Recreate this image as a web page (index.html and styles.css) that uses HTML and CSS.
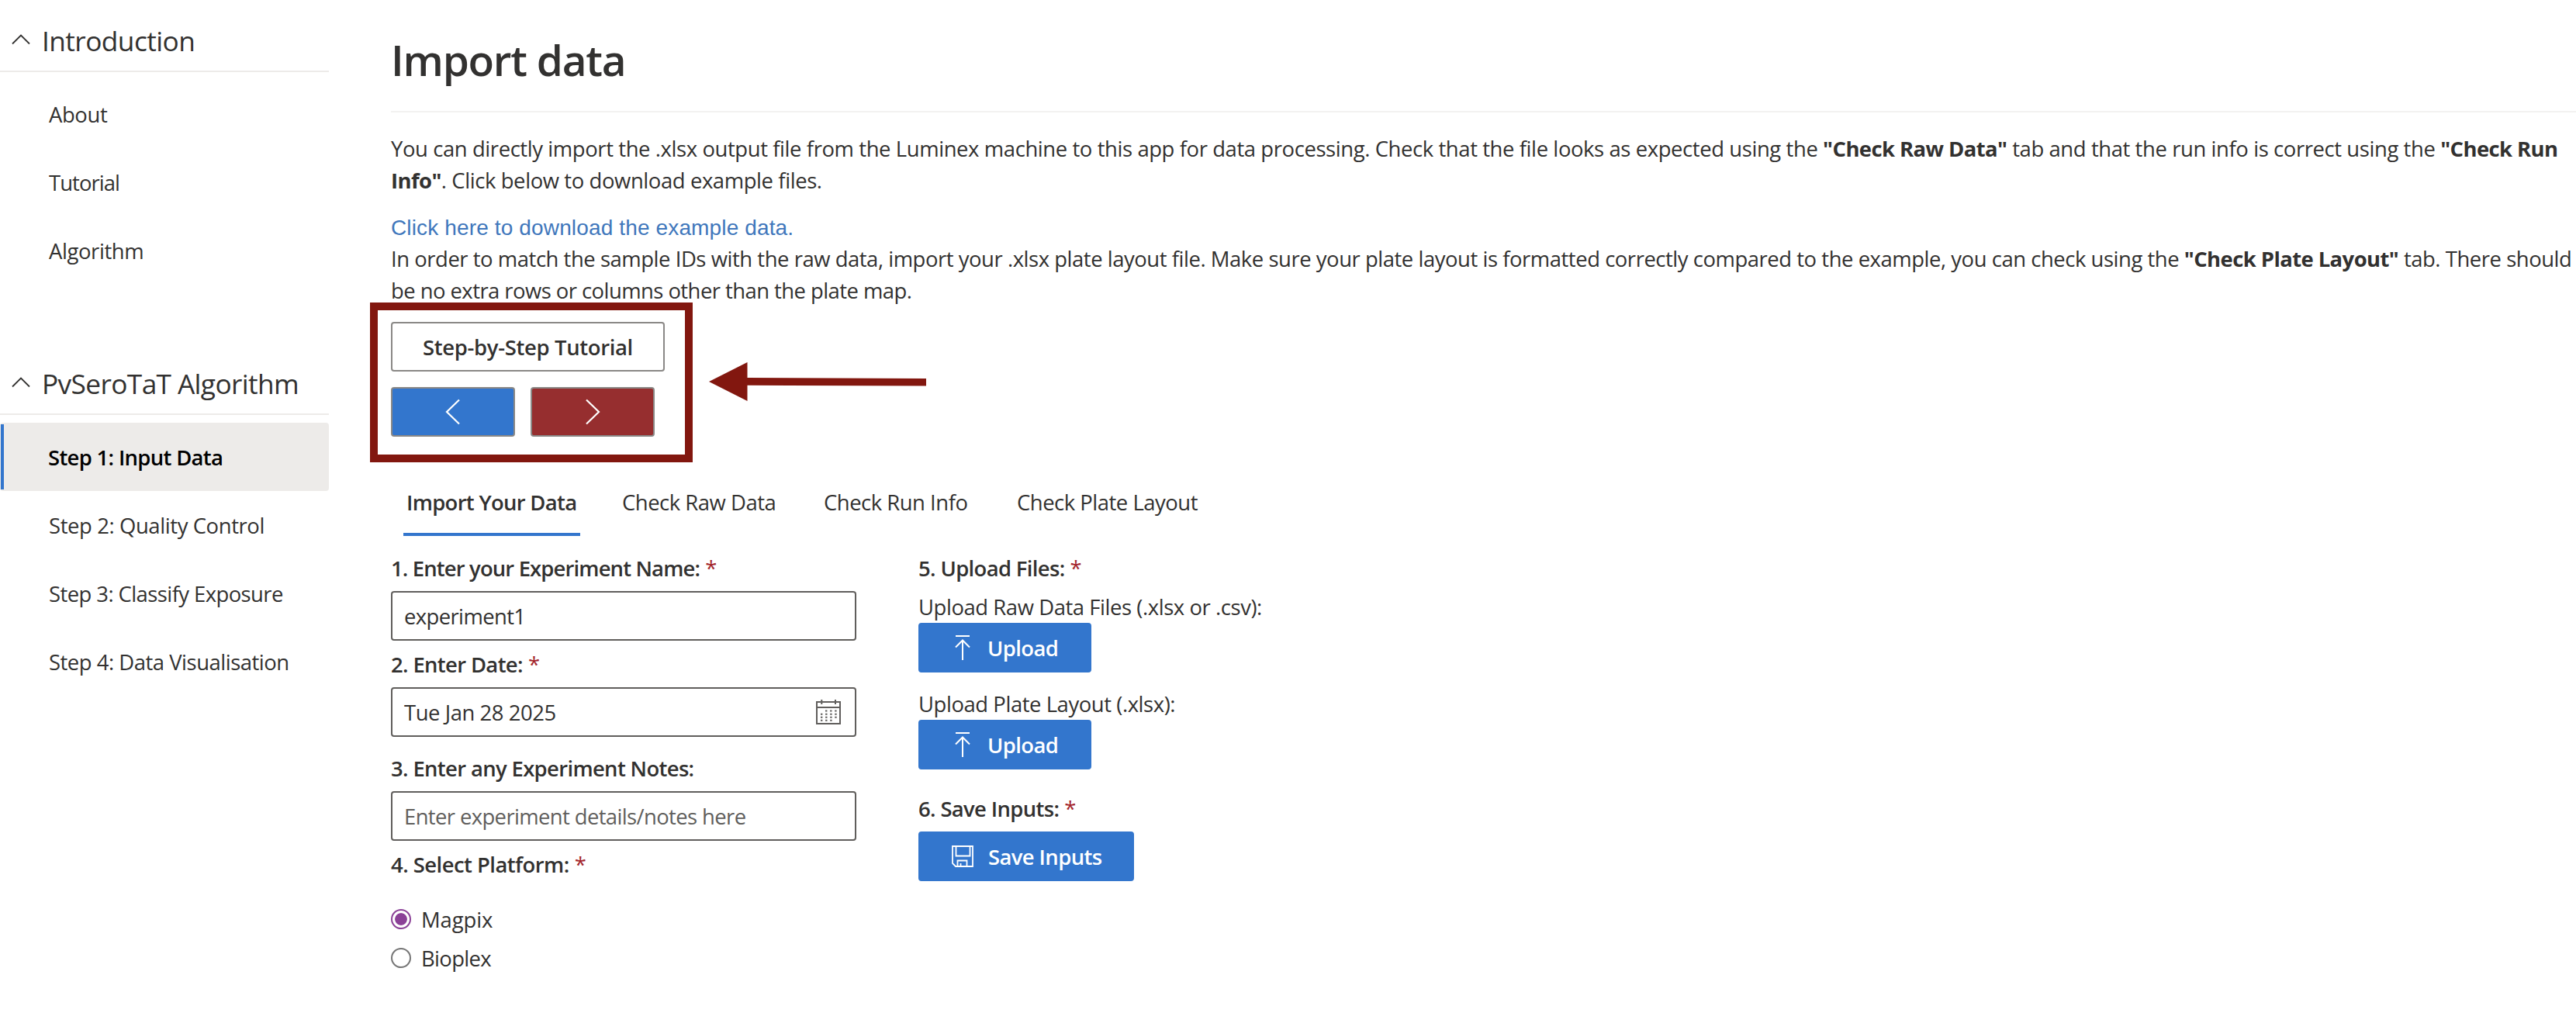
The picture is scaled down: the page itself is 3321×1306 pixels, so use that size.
FILE: index.html
```html
<!DOCTYPE html>
<html lang="en">
<head>
<meta charset="utf-8">
<title>Import data</title>
<link rel="stylesheet" href="styles.css">
</head>
<body>
<div class="app">
  <nav class="sidebar">
    <section class="nav-group">
      <h2 class="nav-header"><svg class="nav-chevron" viewBox="0 0 24 14"><path d="M1 12.5 12 1.5 23 12.5"/></svg><span class="nav-title-intro">Introduction</span></h2>
      <ul class="nav-list">
        <li class="nav-item">About</li>
        <li class="nav-item nav-tutorial">Tutorial</li>
        <li class="nav-item">Algorithm</li>
      </ul>
    </section>
    <section class="nav-group">
      <h2 class="nav-header"><svg class="nav-chevron" viewBox="0 0 24 14"><path d="M1 12.5 12 1.5 23 12.5"/></svg><span>PvSeroTaT Algorithm</span></h2>
      <ul class="nav-list">
        <li class="nav-item nav-item-active">Step 1: Input Data</li>
        <li class="nav-item">Step 2: Quality Control</li>
        <li class="nav-item nav-classify">Step 3: Classify Exposure</li>
        <li class="nav-item nav-visual">Step 4: Data Visualisation</li>
      </ul>
    </section>
  </nav>

  <main class="content">
    <h1 class="page-title">Import data</h1>
    <div class="copy">
      <p>You can directly import the .xlsx output file from the Luminex machine to this app for data processing. Check that the file looks as expected using the <b>"Check Raw Data"</b> tab and that the run info is correct using the <b>"Check Run<br>Info"</b>. Click below to download example files.</p>
      <p class="download"><a class="download-link">Click here to download the example data.</a></p>
      <p class="plate-copy">In order to match the sample IDs with the raw data, import your .xlsx plate layout file. Make sure your plate layout is formatted correctly compared to the example, you can check using the <b>"Check Plate Layout"</b> tab. There should<br><span class="plate-tail">be no extra rows or columns other than the plate map.</span></p>
    </div>

    <div class="tutorial">
      <button class="btn btn-tutorial">Step-by-Step Tutorial</button>
      <div class="pager">
        <button class="btn btn-prev"><svg class="pager-icon" viewBox="0 0 20 34"><path d="M18 1.5 2 17 18 32.5"/></svg></button>
        <button class="btn btn-next"><svg class="pager-icon" viewBox="0 0 20 34"><path d="M2 1.5 18 17 2 32.5"/></svg></button>
      </div>
      <div class="highlight"></div>
      <svg class="pointer" viewBox="0 0 280 50"><path d="M0 25 49.5 0V20L280 21V30.5L49.5 29.7V50Z"/></svg>
    </div>

    <div class="tabs">
      <div class="tab tab-active">Import Your Data</div>
      <div class="tab">Check Raw Data</div>
      <div class="tab">Check Run Info</div>
      <div class="tab">Check Plate Layout</div>
    </div>

    <div class="form">
      <div class="form-col">
        <label class="label label-name">1. Enter your Experiment Name:<span class="req">*</span></label>
        <input class="field" type="text" value="experiment1">
        <label class="label">2. Enter Date:<span class="req">*</span></label>
        <div class="field date-field"><span>Tue Jan 28 2025</span>
          <svg class="calendar" viewBox="0 0 32 32">
            <path d="M1 3H31V31H1ZM1 10H31M7.3 0V6M25 0V6"/>
            <path class="dots" d="M12 14.5H27M6 18.7H27M6 22.7H27M6 26.7H21"/>
          </svg>
        </div>
        <label class="label label-notes">3. Enter any Experiment Notes:</label>
        <input class="field" type="text" placeholder="Enter experiment details/notes here">
        <label class="label label-platform">4. Select Platform:<span class="req">*</span></label>
        <div class="radios">
          <div class="radio"><span class="radio-mark radio-on"></span>Magpix</div>
          <div class="radio radio-bioplex"><span class="radio-mark"></span>Bioplex</div>
        </div>
      </div>
      <div class="form-col">
        <label class="label">5. Upload Files:<span class="req">*</span></label>
        <div class="upload">
          <div class="upload-text">Upload Raw Data Files (.xlsx or .csv):</div>
          <button class="btn btn-primary"><svg class="upload-icon" viewBox="0 0 20 32"><path d="M1 1H19M10 32V6.5M1 15.5 10 6.5 19 15.5"/></svg>Upload</button>
        </div>
        <div class="upload">
          <div class="upload-text">Upload Plate Layout (.xlsx):</div>
          <button class="btn btn-primary"><svg class="upload-icon" viewBox="0 0 20 32"><path d="M1 1H19M10 32V6.5M1 15.5 10 6.5 19 15.5"/></svg>Upload</button>
        </div>
        <label class="label">6. Save Inputs:<span class="req">*</span></label>
        <button class="btn btn-primary btn-save"><svg class="save-icon" viewBox="0 0 28 28"><path d="M1 1H27V27H5L1 23ZM5.5 1V13.5H23.5V1M7.5 27V19.5H19.5V27M11.5 27V23"/></svg>Save Inputs</button>
      </div>
    </div>
  </main>
</div>
</body>
</html>
```
FILE: styles.css
```css
* {
  box-sizing: border-box;
}

body {
  margin: 0;
  background: #fff;
  color: #323130;
  font: 400 27.44px/41px "Open Sans", "Noto Sans", sans-serif;
  letter-spacing: -0.0158em;
  overflow: hidden;
}

h1, h2, p, ul {
  margin: 0;
  padding: 0;
}

.app {
  display: flex;
  width: 3321px;
  height: 1306px;
}

/* Sidebar */
.sidebar {
  width: 424px;
  margin-right: 80px;
  padding-top: 13px;
  display: flex;
  flex-direction: column;
  gap: 88px;
}

.nav-header {
  display: flex;
  height: 80px;
  border-bottom: 2px solid #edebe9;
  font-size: 35.28px;
  font-weight: 400;
  line-height: 78px;
  letter-spacing: -0.0178em;
}

.nav-title-intro {
  letter-spacing: -0.016em;
}

.nav-chevron {
  width: 24px;
  height: 14px;
  margin: 31px 15px 0 15px;
  fill: none;
  stroke: #323130;
  stroke-width: 1.8;
}

.nav-list {
  padding-top: 10px;
  list-style: none;
}

.nav-item {
  height: 88px;
  padding-left: 63px;
  line-height: 89px;
  letter-spacing: -0.0145em;
}

.nav-tutorial {
  letter-spacing: -0.034em;
}

.nav-classify {
  letter-spacing: -0.021em;
}

.nav-visual {
  letter-spacing: -0.0175em;
}

.nav-item-active {
  padding-left: 62px;
  border-radius: 4px;
  background: linear-gradient(#3376cd, #3376cd) 1px 2px / 4px 84px no-repeat #edebe9;
  color: #000;
  font-weight: 600;
  letter-spacing: -0.0246em;
}

/* Main column */
.content {
  flex: 1;
}

.page-title {
  margin-top: 40px;
  padding-bottom: 29px;
  border-bottom: 2px solid #f3f2f1;
  font-size: 54.9px;
  font-weight: 600;
  line-height: 74px;
  letter-spacing: -0.0225em;
}

.copy {
  padding-top: 26px;
  letter-spacing: -0.0147em;
  white-space: nowrap;
}

.copy b {
  letter-spacing: -0.021em;
}

.plate-copy {
  letter-spacing: -0.0166em;
}

.plate-tail {
  letter-spacing: -0.02em;
}

.download {
  height: 40px;
  margin-top: 20px;
  line-height: 40px;
}

.download-link {
  color: #4077bc;
  font-family: "Liberation Sans", Arial, sans-serif;
  font-size: 28px;
  letter-spacing: 0.005em;
}

.btn {
  display: flex;
  align-items: center;
  justify-content: center;
  height: 64px;
  padding: 0;
  border: 2px solid #8a8886;
  border-radius: 4px;
  font: inherit;
  font-weight: 600;
  letter-spacing: -0.0121em;
  color: #323130;
  background: #fff;
}

.tutorial {
  position: relative;
  margin-top: 20px;
}

.btn-tutorial {
  width: 353px;
}

.pager {
  display: flex;
  gap: 20px;
  margin-top: 20px;
}

.btn-prev,
.btn-next {
  width: 160px;
  background: #3376cd;
}

.btn-next {
  background: #962e2f;
}

.pager-icon {
  width: 20px;
  height: 34px;
  fill: none;
  stroke: #fff;
  stroke-width: 2.2;
}

.highlight {
  position: absolute;
  left: -27px;
  top: -25px;
  width: 416px;
  height: 206px;
  border: 10px solid #82170f;
}

.pointer {
  position: absolute;
  left: 409.5px;
  top: 52px;
  width: 280px;
  height: 50px;
  fill: #82170f;
}

/* Tabs */
.tabs {
  display: grid;
  grid-template-columns: 278px 260px 249px 260px;
  margin: 40px 0 11px 16px;
}

.tab {
  height: 88px;
  padding-left: 4px;
  line-height: 89px;
  letter-spacing: -0.0175em;
}

.tab-active {
  width: 228px;
  background: linear-gradient(#3376cd, #3376cd) bottom / 100% 4px no-repeat;
  font-weight: 600;
  letter-spacing: -0.025em;
}

/* Form */
.form {
  display: grid;
  grid-template-columns: 600px 500px;
  column-gap: 80px;
}

.label {
  display: block;
  height: 60px;
  font-weight: 600;
  line-height: 61px;
  letter-spacing: -0.0235em;
}

.label-name {
  letter-spacing: -0.031em;
}

.label-notes {
  margin-top: 10px;
}

.label-platform {
  letter-spacing: -0.0195em;
}

.req {
  margin-left: 7px;
  color: #a4262c;
  font-weight: 400;
}

.field {
  display: flex;
  align-items: center;
  justify-content: space-between;
  width: 600px;
  height: 64px;
  padding: 0 18px 0 15px;
  border: 2px solid #605e5c;
  border-radius: 4px;
  background: #fff;
  color: #323130;
  font: inherit;
  letter-spacing: -0.0225em;
}

.field::placeholder {
  color: #605e5c;
  opacity: 1;
}

.date-field {
  letter-spacing: -0.016em;
}

.calendar {
  width: 32px;
  height: 32px;
  fill: none;
  stroke: #605e5c;
  stroke-width: 2;
}

.dots {
  stroke-dasharray: 2.4 3.7;
}

.radios {
  margin-top: 16px;
}

.radio {
  display: flex;
  align-items: center;
  gap: 13px;
  height: 50px;
  letter-spacing: -0.004em;
}

.radio-bioplex {
  letter-spacing: -0.024em;
}

.radio-mark {
  width: 26px;
  height: 26px;
  border: 2px solid #767676;
  border-radius: 50%;
}

.radio-on {
  border-color: #8b4197;
  background: radial-gradient(circle, #8b4197 7.4px, #fff 8.2px);
}

.upload {
  margin-bottom: 20px;
}

.btn-primary {
  justify-content: flex-start;
  width: 223px;
  padding-left: 45px;
  border-color: #3376cd;
  background: #3376cd;
  color: #fff;
  letter-spacing: -0.022em;
}

.btn svg {
  display: block;
}

.upload-icon {
  width: 20px;
  height: 32px;
  margin-right: 22px;
  fill: none;
  stroke: #fff;
  stroke-width: 2;
}

.btn-save {
  width: 278px;
  padding-left: 41px;
}

.save-icon {
  width: 28px;
  height: 28px;
  margin-right: 19px;
  fill: none;
  stroke: #fff;
  stroke-width: 1.8;
}
```
